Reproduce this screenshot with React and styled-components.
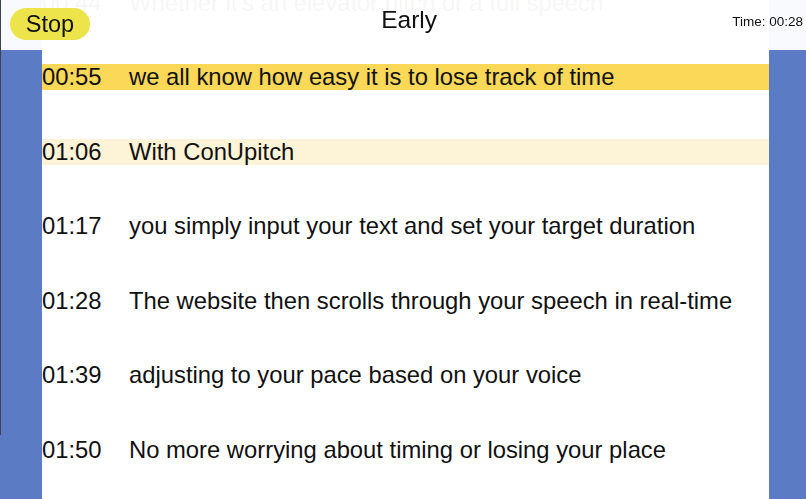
import React from "react";
import styled, { createGlobalStyle } from "styled-components";

const Global = createGlobalStyle`
  html, body { margin: 0; padding: 0; height: 100%; overflow: hidden; }
  body { background: #5b7bc4; font-family: "Liberation Sans", Arial, sans-serif; }
  #root { height: 100%; }
`;

const Page = styled.div`
  height: 100%;
  padding: 0 37px 0 42px;
  box-sizing: border-box;
  position: relative;
`;

const Column = styled.main`
  background: #ffffff;
  height: 100%;
  overflow: hidden;
`;

const List = styled.div`
  display: flex;
  flex-direction: column;
  gap: 48.5px;
  margin-top: -10.5px;
`;

const Row = styled.div`
  display: grid;
  grid-template-columns: 87px 1fr;
  height: 26px;
  line-height: 26px;
  align-items: center;
  font-size: 23.8px;
  color: #111;
  white-space: nowrap;
  background: ${(p) =>
    p.$state === "current" ? "#fcd858" : p.$state === "next" ? "#fdf3d6" : "transparent"};
`;

const Header = styled.header`
  position: fixed;
  top: 0;
  left: 0;
  right: 0;
  height: 50px;
  background: rgba(255, 255, 255, 0.965);
  display: flex;
  align-items: flex-start;
  justify-content: space-between;
  padding: 0 3px 0 10px;
  box-sizing: border-box;
`;

const StopButton = styled.button`
  background: #ece44a;
  border: none;
  border-radius: 16px;
  height: 32px;
  width: 80px;
  margin-top: 8px;
  font-family: inherit;
  font-size: 23.5px;
  line-height: 32px;
  color: #111;
  padding: 0;
  cursor: pointer;
`;

const Status = styled.div`
  font-size: 24.5px;
  line-height: 28px;
  margin-top: 6px;
  color: #111;
  margin-right: 4px;
`;

const Timer = styled.div`
  font-size: 13.5px;
  line-height: 16px;
  margin-top: 14px;
  color: #111;
`;

const EdgeLine = styled.div`
  position: fixed;
  left: 0;
  top: 0;
  width: 1px;
  height: 435px;
  background: #3d4250;
`;

const lines = [
  ["00:44", "Whether it's an elevator pitch or a full speech"],
  ["00:55", "we all know how easy it is to lose track of time", "current"],
  ["01:06", "With ConUpitch", "next"],
  ["01:17", "you simply input your text and set your target duration"],
  ["01:28", "The website then scrolls through your speech in real-time"],
  ["01:39", "adjusting to your pace based on your voice"],
  ["01:50", "No more worrying about timing or losing your place"],
  ["02:01", "Stay on track and deliver with confidence"],
];

export default function App() {
  return (
    <>
      <Global />
      <Page>
        <Column>
          <List>
            {lines.map(([t, text, state]) => (
              <Row key={t} $state={state}>
                <span>{t}</span>
                <span>{text}</span>
              </Row>
            ))}
          </List>
        </Column>
        <Header>
          <StopButton>Stop</StopButton>
          <Status>Early</Status>
          <Timer>Time: 00:28</Timer>
        </Header>
        <EdgeLine />
      </Page>
    </>
  );
}
